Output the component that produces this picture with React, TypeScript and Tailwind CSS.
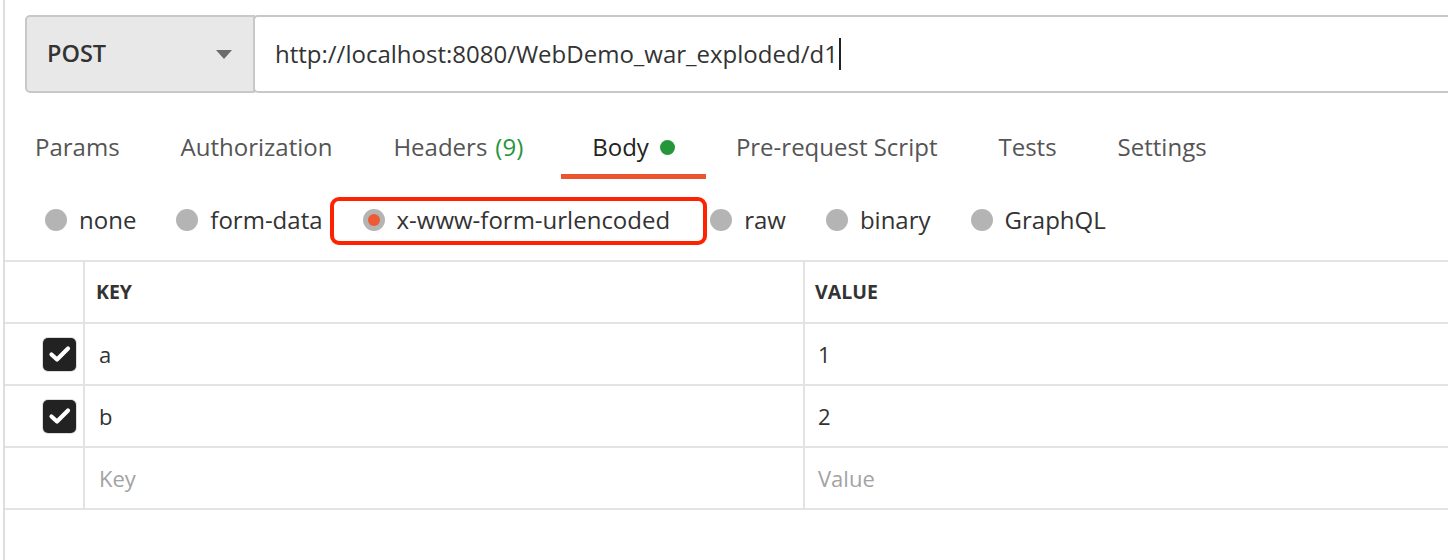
import React from "react";

const tabs = [
  { label: "Params" },
  { label: "Authorization" },
  { label: "Headers", extra: "(9)" },
  { label: "Body", active: true },
  { label: "Pre-request Script" },
  { label: "Tests" },
  { label: "Settings" },
];

const radios = [
  { label: "none" },
  { label: "form-data" },
  { label: "x-www-form-urlencoded", selected: true },
  { label: "raw" },
  { label: "binary" },
  { label: "GraphQL" },
];

function Check() {
  return (
    <div className="w-[33px] h-[33px] rounded-[5px] bg-[#222222] ring-1 ring-[#dcdcdc] flex items-center justify-center">
      <svg width="24" height="24" viewBox="0 0 24 24">
        <path d="M3.5 12.5 L9 17.5 L20 6.5" fill="none" stroke="#ffffff" strokeWidth="4.2" strokeLinecap="round" strokeLinejoin="round" />
      </svg>
    </div>
  );
}

function Row({ k, v, checked, placeholder }: { k: string; v: string; checked?: boolean; placeholder?: boolean }) {
  const txt = placeholder ? "text-[#a3a3a3]" : "text-[#333333]";
  return (
    <div className="flex h-[62px] border-b-2 border-[#e3e3e3]">
      <div className="w-[80px] shrink-0 border-r-2 border-[#e3e3e3] flex items-center justify-end pr-[7px]">
        {checked ? <Check /> : null}
      </div>
      <div className={`w-[720px] shrink-0 border-r-2 border-[#e3e3e3] flex items-center pl-[14px] text-[22px] ${txt}`}>{k}</div>
      <div className={`flex-1 flex items-center pl-[13px] text-[22px] ${txt}`}>{v}</div>
    </div>
  );
}

export default function App() {
  return (
    <div className="w-[1448px] h-[560px] overflow-hidden bg-white" style={{ fontFamily: '"Open Sans", "Noto Sans", sans-serif' }}>
      <div className="ml-[3px] h-full border-l-2 border-[#dedede]">
        {/* request bar */}
        <div className="flex pt-[15px] pl-[20px]">
          <div className="w-[230px] h-[78px] shrink-0 bg-[#e8e8e8] border-2 border-[#c8c8c8] rounded-l-[5px] flex items-center justify-between pl-[20px] pr-[21px]">
            <span className="text-[23.5px] font-semibold text-[#333333]">POST</span>
            <svg width="16" height="9" viewBox="0 0 16 9">
              <path d="M0 0 L16 0 L8 9 Z" fill="#6b6b6b" />
            </svg>
          </div>
          <div className="flex-1 h-[78px] -ml-[2px] border-2 border-r-0 border-[#c8c8c8] rounded-l-[5px] bg-white flex items-center pl-[20px]">
            <span className="text-[24px] text-[#333333]">http://localhost:8080/WebDemo_war_exploded/d1</span>
            <span className="w-[2px] h-[32px] bg-[#222222] ml-[1px]" />
          </div>
        </div>

        {/* tabs */}
        <div className="flex mt-[26px] pl-[30px] gap-[61px]">
          {tabs.map((t) => (
            <div
              key={t.label}
              className={`pt-[12px] pb-[11px] border-b-[5px] flex items-center text-[24px] leading-[32px] ${
                t.active ? "border-[#ec5430] text-[#222222] px-[31px] -mr-[31px] ml-[-23px]" : "border-transparent text-[#555555]"
              }`}
            >
              <span>{t.label}</span>
              {t.extra ? <span className="ml-[8px] text-[#26963b]">{t.extra}</span> : null}
              {t.active ? <span className="ml-[11px] w-[15px] h-[15px] rounded-full bg-[#26963b]" /> : null}
            </div>
          ))}
        </div>

        {/* radios */}
        <div className="flex items-center h-[81px] pl-[40px] gap-[40px]">
          {radios.map((r) => (
            <div key={r.label} className="relative flex items-center gap-[12px]">
              <span className="w-[22px] h-[22px] rounded-full bg-[#b4b4b4] flex items-center justify-center">
                {r.selected ? <span className="w-[12px] h-[12px] rounded-full bg-[#ee5a33]" /> : null}
              </span>
              <span className="text-[24px] leading-[32px] text-[#333333]">{r.label}</span>
              {r.selected ? (
                <span className="absolute -left-[33px] -right-[37px] -top-[7px] -bottom-[9px] border-[4px] border-[#ff2200] rounded-[9px] pointer-events-none" />
              ) : null}
            </div>
          ))}
        </div>

        {/* table */}
        <div className="border-t-2 border-[#e3e3e3]">
          <div className="flex h-[62px] border-b-2 border-[#e3e3e3]">
            <div className="w-[80px] shrink-0 border-r-2 border-[#e3e3e3]" />
            <div className="w-[720px] shrink-0 border-r-2 border-[#e3e3e3] flex items-center pl-[11px] text-[19.5px] font-bold text-[#333333]">KEY</div>
            <div className="flex-1 flex items-center pl-[10px] text-[19.5px] font-bold text-[#333333]">VALUE</div>
          </div>
          <Row k="a" v="1" checked />
          <Row k="b" v="2" checked />
          <Row k="Key" v="Value" placeholder />
        </div>
      </div>
    </div>
  );
}
